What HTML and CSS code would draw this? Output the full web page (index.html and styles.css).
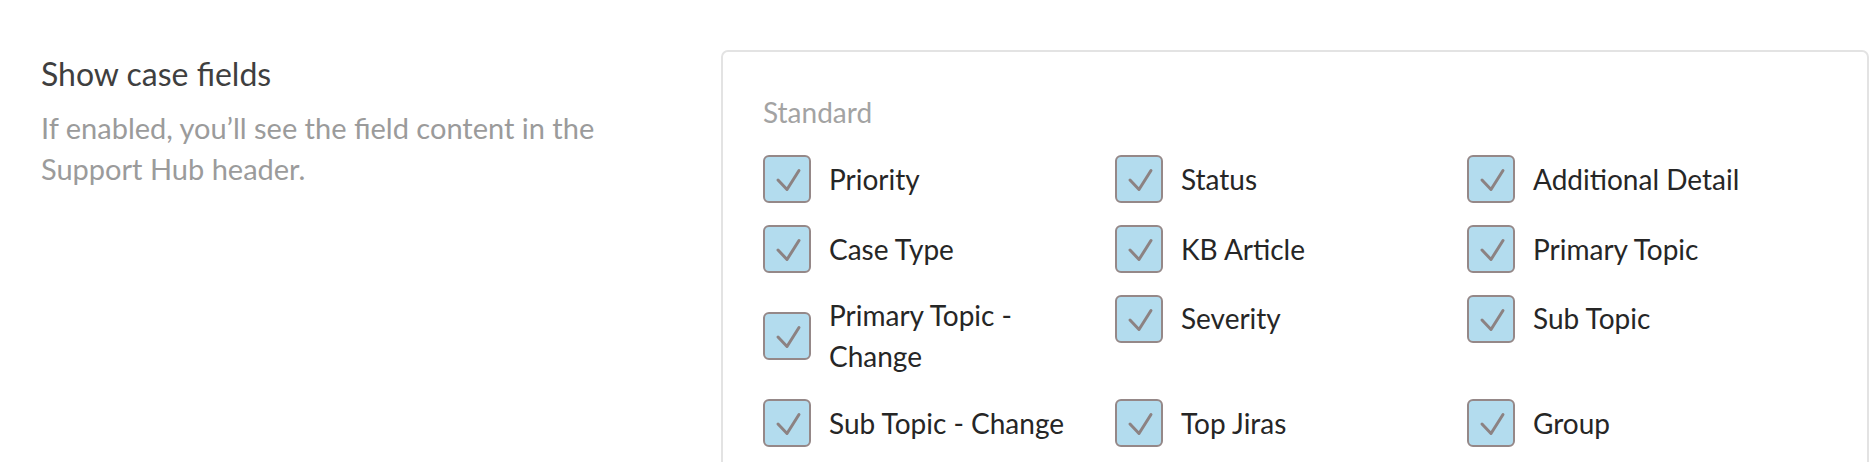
FILE: index.html
```html
<!DOCTYPE html>
<html lang="en">
<head>
<meta charset="utf-8">
<title>Show case fields</title>
<link rel="stylesheet" href="styles.css">
</head>
<body>
<div class="page">
  <section class="intro">
    <h2 class="title">Show case fields</h2>
    <p class="desc">If enabled, you’ll see the field content in the Support Hub header.</p>
  </section>
  <section class="card">
    <div class="group-label">Standard</div>
    <div class="grid">
      <label class="item"><span class="box"><svg viewBox="2 2 44 44" width="44" height="44"><path d="M15 25 L24 34.5 L36 15.5"/></svg></span><span class="text">Priority</span></label>
      <label class="item"><span class="box"><svg viewBox="2 2 44 44" width="44" height="44"><path d="M15 25 L24 34.5 L36 15.5"/></svg></span><span class="text">Status</span></label>
      <label class="item"><span class="box"><svg viewBox="2 2 44 44" width="44" height="44"><path d="M15 25 L24 34.5 L36 15.5"/></svg></span><span class="text">Additional Detail</span></label>
      <label class="item"><span class="box"><svg viewBox="2 2 44 44" width="44" height="44"><path d="M15 25 L24 34.5 L36 15.5"/></svg></span><span class="text">Case Type</span></label>
      <label class="item"><span class="box"><svg viewBox="2 2 44 44" width="44" height="44"><path d="M15 25 L24 34.5 L36 15.5"/></svg></span><span class="text">KB Article</span></label>
      <label class="item"><span class="box"><svg viewBox="2 2 44 44" width="44" height="44"><path d="M15 25 L24 34.5 L36 15.5"/></svg></span><span class="text">Primary Topic</span></label>
      <label class="item"><span class="box"><svg viewBox="2 2 44 44" width="44" height="44"><path d="M15 25 L24 34.5 L36 15.5"/></svg></span><span class="text">Primary Topic -<br>Change</span></label>
      <label class="item item-top"><span class="box"><svg viewBox="2 2 44 44" width="44" height="44"><path d="M15 25 L24 34.5 L36 15.5"/></svg></span><span class="text">Severity</span></label>
      <label class="item item-top"><span class="box"><svg viewBox="2 2 44 44" width="44" height="44"><path d="M15 25 L24 34.5 L36 15.5"/></svg></span><span class="text">Sub Topic</span></label>
      <label class="item"><span class="box"><svg viewBox="2 2 44 44" width="44" height="44"><path d="M15 25 L24 34.5 L36 15.5"/></svg></span><span class="text">Sub Topic - Change</span></label>
      <label class="item"><span class="box"><svg viewBox="2 2 44 44" width="44" height="44"><path d="M15 25 L24 34.5 L36 15.5"/></svg></span><span class="text">Top Jiras</span></label>
      <label class="item"><span class="box"><svg viewBox="2 2 44 44" width="44" height="44"><path d="M15 25 L24 34.5 L36 15.5"/></svg></span><span class="text">Group</span></label>
    </div>
  </section>
</div>
</body>
</html>
```
FILE: styles.css
```css
html, body {
  margin: 0;
  padding: 0;
  background: #ffffff;
  height: 462px;
  overflow: hidden;
}

body {
  font-family: Lato, "Noto Sans", "Liberation Sans", sans-serif;
  color: #2b2b2b;
}

.page {
  display: flex;
  align-items: flex-start;
  padding: 50px 3px 0 41px;
}

.intro {
  flex: none;
  width: 680px;
}

.title {
  margin: 0;
  font-weight: 400;
  font-size: 32px;
  line-height: 40px;
  color: #3f3f3f;
  padding-top: 4px;
}

.desc {
  margin: 13px 0 0;
  width: 600px;
  font-size: 29px;
  line-height: 41px;
  color: #9b9b9b;
}

.card {
  flex: 1;
  min-height: 460px;
  border: 2px solid #e3e3e3;
  border-radius: 7px;
  padding: 42px 40px 0;
}

.group-label {
  font-size: 28px;
  line-height: 36px;
  color: #a3a3a3;
}

.grid {
  margin-top: 25px;
  display: grid;
  grid-template-columns: repeat(3, 352px);
  row-gap: 22px;
}

.item {
  display: flex;
  align-items: center;
  gap: 18px;
}

.item-top {
  align-items: flex-start;
}

.box {
  flex: none;
  width: 44px;
  height: 44px;
  border: 2px solid #958888;
  border-radius: 6px;
  background: #b3dcee;
  display: block;
}

.box svg {
  display: block;
}

.box path {
  fill: none;
  stroke: #8c8282;
  stroke-width: 3;
  stroke-linecap: round;
  stroke-linejoin: round;
}

.text {
  font-size: 28px;
  line-height: 41px;
  color: #262626;
}

.item-top .text {
  margin-top: 3px;
}
```
